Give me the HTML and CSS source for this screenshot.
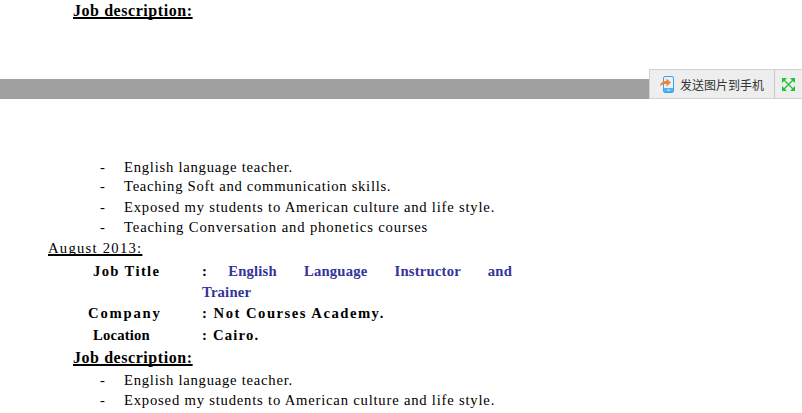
FILE: index.html
```html
<!DOCTYPE html>
<html lang="en">
<head>
<meta charset="utf-8">
<title>Job description</title>
<link rel="stylesheet" href="styles.css">
</head>
<body>
<section class="top">
  <h3 class="job-heading">Job description:</h3>
</section>
<div class="bar">
  <div class="toolbar">
    <button class="send" type="button">
      <svg class="send-icon" width="14" height="17" viewBox="0 0 14 17">
        <rect x="3.5" y="0.5" width="10" height="16" rx="1.5" fill="#e4f3fc" stroke="#3aa5e6"/>
        <rect x="4" y="12" width="9" height="4" fill="#4db4ee"/>
        <rect x="7" y="13.5" width="3" height="1" fill="#e4f3fc"/>
        <path d="M0 10 C0.5 6.5 3 5 6.5 5 V2.5 L11 6.5 L6.5 10.5 V8 C4 8 2 8.5 0 10Z" fill="#f2813a"/>
      </svg>
      <span>发送图片到手机</span>
    </button>
    <button class="expand" type="button" aria-label="expand">
      <svg width="13" height="13" viewBox="0 0 13 13">
        <path d="M0 0H5L0 5ZM13 0V5L8 0ZM0 13V8L5 13ZM13 13H8L13 8Z" fill="#1fc52f"/>
        <path d="M2 2 11 11M11 2 2 11" stroke="#1fc52f" stroke-width="1.3" fill="none"/>
      </svg>
    </button>
  </div>
</div>
<main class="doc">
  <ul class="duties">
    <li class="first sp-english">English language teacher.</li>
    <li class="r21 sp-soft">Teaching Soft and communication skills.</li>
    <li class="r20 sp-exposed">Exposed my students to American culture and life style.</li>
    <li class="r21 sp-conv">Teaching Conversation and phonetics courses</li>
  </ul>
  <p class="date">August 2013:</p>
  <div class="facts">
    <div class="label title-label">Job Title</div>
    <div class="value role"><span class="colon">:</span> English Language Instructor and Trainer</div>
    <div class="label company-label">Company</div>
    <div class="value company-value">: Not Courses Academy.</div>
    <div class="label location-label">Location</div>
    <div class="value location-value">: Cairo.</div>
  </div>
  <h3 class="job-heading second">Job description:</h3>
  <ul class="duties">
    <li class="r20 sp-english">English language teacher.</li>
    <li class="r20 sp-exposed">Exposed my students to American culture and life style.</li>
  </ul>
</main>
</body>
</html>
```
FILE: styles.css
```css
html, body { margin: 0; padding: 0; }
body {
  width: 802px;
  height: 413px;
  overflow: hidden;
  background: #fff;
  color: #000;
  font-family: "Liberation Serif", "Times New Roman", serif;
  font-size: 14.67px;
}
.top {
  height: 79px;
  box-sizing: border-box;
  padding-top: 1px;
}
.job-heading {
  margin: 0;
  padding-left: 73px;
  font-size: 16px;
  font-weight: bold;
  line-height: 20px;
  height: 20px;
  letter-spacing: 0.56px;
  text-decoration: underline;
  text-decoration-thickness: 2px;
  text-decoration-skip-ink: none;
  text-underline-offset: 1px;
}
.second { margin-top: 2px; height: 22px; }
.bar {
  position: relative;
  height: 20px;
  background: #a0a0a0;
}
.toolbar {
  position: absolute;
  right: 0;
  bottom: 0;
  width: 153px;
  height: 30px;
  display: flex;
  box-sizing: border-box;
  background: #eeeeee;
  border: 1px solid #d2d2d2;
  border-right: 0;
}
.toolbar button {
  border: 0;
  background: none;
  padding: 0;
  display: flex;
  align-items: center;
}
.toolbar .send {
  width: 125px;
  padding-left: 10px;
  gap: 6px;
  border-right: 1px solid #c8c8c8;
  font: 12px "Noto Sans CJK SC", sans-serif;
  color: #333;
  box-sizing: border-box;
}
.send-icon { flex: none; }
.expand { flex: 1; justify-content: center; }
.doc { padding-top: 59px; }
.duties {
  list-style: none;
  margin: 0;
  padding: 0 0 0 124px;
}
.duties li { position: relative; }
.duties li::before {
  content: "-";
  position: absolute;
  left: -24px;
}
.first { height: 18px; line-height: 19px; }
.r20 { height: 20px; line-height: 20px; }
.r21 { height: 21px; line-height: 21px; }
.sp-english { letter-spacing: 0.75px; }
.sp-soft { letter-spacing: 0.71px; }
.sp-exposed { letter-spacing: 0.79px; }
.sp-conv { letter-spacing: 0.85px; }
.date {
  margin: 0;
  padding-left: 48px;
  height: 23px;
  line-height: 20px;
  letter-spacing: 1.25px;
  text-decoration: underline;
  text-decoration-thickness: 2px;
  text-decoration-skip-ink: none;
  text-underline-offset: 1px;
}
.facts {
  display: grid;
  grid-template-columns: 202px 310px;
  font-weight: bold;
}
.label, .value { line-height: 21px; }
.title-label { padding-left: 93px; letter-spacing: 1.35px; }
.company-label { padding-left: 88px; letter-spacing: 1.8px; }
.location-label { padding-left: 93px; letter-spacing: 0.2px; }
.role {
  height: 42px;
  color: #33339a;
  text-align: justify;
  letter-spacing: 0.2px;
  word-spacing: 10px;
}
.colon { color: #000; margin-right: -6px; }
.company-value { height: 22px; letter-spacing: 1.5px; }
.location-value { height: 20px; letter-spacing: 1.2px; }
```
